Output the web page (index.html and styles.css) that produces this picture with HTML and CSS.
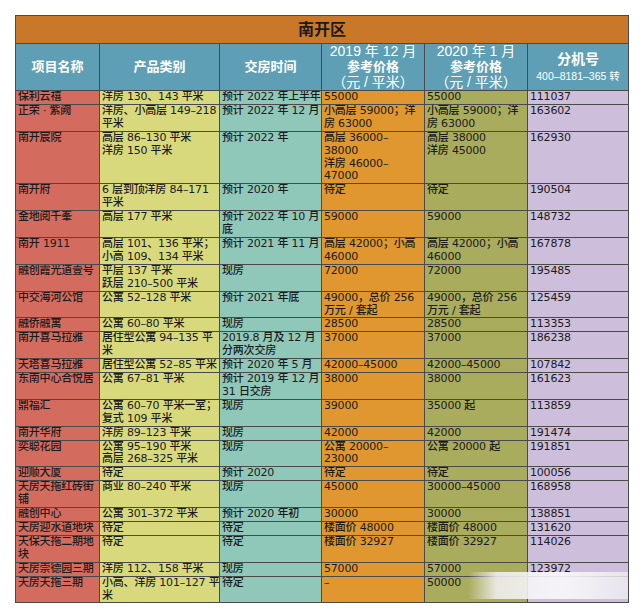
FILE: index.html
```html
<!DOCTYPE html>
<html lang="zh-CN">
<head>
<meta charset="utf-8">
<title>南开区</title>
<link rel="stylesheet" href="styles.css">
</head>
<body>
<div class="sheet">
<table class="grid">
<colgroup>
<col class="k1"><col class="k2"><col class="k3"><col class="k4"><col class="k5"><col class="k6">
</colgroup>
<thead>
<tr><th colspan="6" class="title">南开区</th></tr>
<tr class="head">
<th><b>项目名称</b></th>
<th><b>产品类别</b></th>
<th><b>交房时间</b></th>
<th><span class="big">2019 年 12 月</span><br><b>参考价格</b><br><span class="big">（元 / 平米）</span></th>
<th><span class="big">2020 年 1 月</span><br><b>参考价格</b><br><span class="big">（元 / 平米）</span></th>
<th><b class="ext">分机号</b><br><span class="small">400–8181–365 转</span></th>
</tr>
</thead>
<tbody>
<tr><td>保利云禧</td><td>洋房 130、143 平米</td><td>预计 2022 年上半年</td><td>55000</td><td>55000</td><td>111037</td></tr>
<tr><td>正荣 · 紫阙</td><td>洋房、小高层 149–218<br>平米</td><td>预计 2022 年 12 月</td><td>小高层 59000；洋<br>房 63000</td><td>小高层 59000；洋<br>房 63000</td><td>163602</td></tr>
<tr><td>南开宸院</td><td>高层 86–130 平米<br>洋房 150 平米</td><td>预计 2022 年</td><td>高层 36000–<br>38000<br>洋房 46000–<br>47000</td><td>高层 38000<br>洋房 45000</td><td>162930</td></tr>
<tr><td>南开府</td><td>6 层到顶洋房 84–171<br>平米</td><td>预计 2020 年</td><td>待定</td><td>待定</td><td>190504</td></tr>
<tr><td>金地阅千峯</td><td>高层 177 平米</td><td>预计 2022 年 10 月<br>底</td><td>59000</td><td>59000</td><td>148732</td></tr>
<tr><td>南开 1911</td><td>高层 101、136 平米；<br>小高 109、134 平米</td><td>预计 2021 年 11 月</td><td>高层 42000；小高<br>46000</td><td>高层 42000；小高<br>46000</td><td>167878</td></tr>
<tr><td>融创霞光道壹号</td><td>平层 137 平米<br>跃层 210–500 平米</td><td>现房</td><td>72000</td><td>72000</td><td>195485</td></tr>
<tr><td>中交海河公馆</td><td>公寓 52–128 平米</td><td>预计 2021 年底</td><td>49000，总价 256<br>万元 / 套起</td><td>49000，总价 256<br>万元 / 套起</td><td>125459</td></tr>
<tr><td>融侨融寓</td><td>公寓 60–80 平米</td><td>现房</td><td>28500</td><td>28500</td><td>113353</td></tr>
<tr><td>南开喜马拉雅</td><td>居住型公寓 94–135 平<br>米</td><td>2019.8 月及 12 月<br>分两次交房</td><td>37000</td><td>37000</td><td>186238</td></tr>
<tr><td>天塔喜马拉雅</td><td>居住型公寓 52–85 平米</td><td>预计 2020 年 5 月</td><td>42000–45000</td><td>42000–45000</td><td>107842</td></tr>
<tr><td>东南中心合悦居</td><td>公寓 67–81 平米</td><td>预计 2019 年 12 月<br>31 日交房</td><td>38000</td><td>38000</td><td>161623</td></tr>
<tr><td>鼎福汇</td><td>公寓 60–70 平米一室；<br>复式 109 平米</td><td>现房</td><td>39000</td><td>35000 起</td><td>113859</td></tr>
<tr><td>南开华府</td><td>洋房 89–123 平米</td><td>现房</td><td>42000</td><td>42000</td><td>191474</td></tr>
<tr><td>奕聪花园</td><td>公寓 95–190 平米<br>高层 268–325 平米</td><td>现房</td><td>公寓 20000–<br>23000</td><td>公寓 20000 起</td><td>191851</td></tr>
<tr><td>迎顺大厦</td><td>待定</td><td>预计 2020</td><td>待定</td><td>待定</td><td>100056</td></tr>
<tr><td>天房天拖红砖街<br>铺</td><td>商业 80–240 平米</td><td>现房</td><td>45000</td><td>30000–45000</td><td>168958</td></tr>
<tr><td>融创中心</td><td>公寓 301–372 平米</td><td>预计 2020 年初</td><td>30000</td><td>30000</td><td>138851</td></tr>
<tr><td>天房迎水道地块</td><td>待定</td><td>待定</td><td>楼面价 48000</td><td>楼面价 48000</td><td>131620</td></tr>
<tr><td>天保天拖二期地<br>块</td><td>待定</td><td>待定</td><td>楼面价 32927</td><td>楼面价 32927</td><td>114026</td></tr>
<tr><td>天房崇德园三期</td><td>洋房 112、158 平米</td><td>现房</td><td>57000</td><td>57000</td><td>123972</td></tr>
<tr><td>天房天拖三期</td><td>小高、洋房 101–127 平<br>米</td><td>待定</td><td>–</td><td>50000</td><td></td></tr>
</tbody>
</table>
<div class="smear"></div>
</div>
</body>
</html>
```

FILE: styles.css
```css
html, body {
  margin: 0;
  padding: 0;
  background: #ffffff;
}

.sheet {
  position: relative;
  padding: 15px 0 0 15px;
  width: 625px;
}

.grid {
  border-collapse: collapse;
  table-layout: fixed;
  width: 613px;
  font-family: "DejaVu Sans", "Noto Sans CJK SC", sans-serif;
  font-size: 11px;
  font-weight: 500;
  letter-spacing: -0.2px;
  color: #1b1b1b;
  border: 1.5px solid #3f3f3f;
}

.k1 { width: 84px; background: #d46b5f; }
.k2 { width: 120px; background: #d8d97d; }
.k3 { width: 102px; background: #8fc7b8; }
.k4 { width: 103px; background: #e0972f; }
.k5 { width: 103px; background: #a9ab5d; }
.k6 { width: 101px; background: #cdbfdb; }

.grid td {
  border: 1px solid #4a4a4a;
  padding: 0 0 0 2px;
  line-height: 12.9px;
  vertical-align: top;
  white-space: nowrap;
  overflow: hidden;
}

.grid th {
  border: 1px solid #4a4a4a;
  padding: 0;
  white-space: nowrap;
  overflow: hidden;
  font-family: "Liberation Sans", "Noto Sans CJK SC", sans-serif;
  letter-spacing: 0;
}

.title {
  height: 27px;
  background: #c9782a;
  color: #1a1a1a;
  font-size: 16px;
  font-weight: 700;
  text-align: center;
  vertical-align: middle;
  line-height: 27px;
}

.head th {
  height: 46px;
  background: #5f9fb5;
  color: #ffffff;
  text-align: center;
  vertical-align: middle;
  font-weight: 400;
  font-size: 13px;
  line-height: 15.3px;
}

.head b {
  font-weight: 700;
  font-size: 13px;
}

.head .big {
  font-size: 14px;
}

.head .ext {
  font-size: 14px;
  line-height: 17px;
}

.head .small {
  font-size: 10.5px;
  line-height: 14px;
}

.smear {
  position: absolute;
  left: 468px;
  top: 572px;
  width: 160px;
  height: 27px;
  background: linear-gradient(to right, rgba(255,255,255,0), rgba(244,242,246,0.85) 18%, rgba(250,249,251,0.9) 60%, rgba(238,236,240,0.8));
}
```
